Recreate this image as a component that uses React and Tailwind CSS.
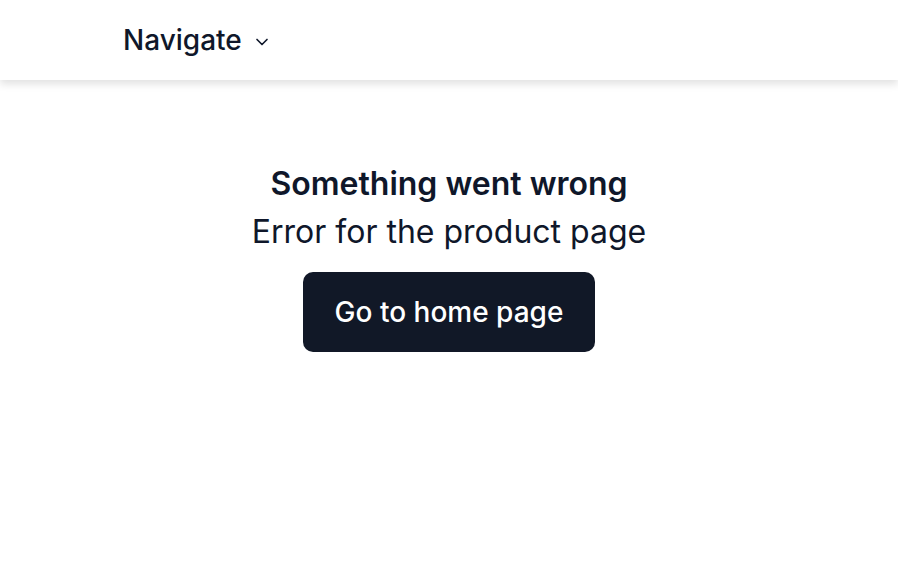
import { ChevronDown } from "lucide-react";

function App() {
  return (
    <div className="min-h-screen bg-white text-[#0f172a] font-['Inter',sans-serif]">
      <header className="flex h-20 items-center bg-white px-[123px] shadow-[0_4px_8px_rgba(0,0,0,0.12)]">
        <button type="button" className="flex items-center gap-[10px] text-[28px] font-medium">
          Navigate
          <ChevronDown className="mt-1 h-5 w-5" strokeWidth={2} />
        </button>
      </header>

      <main className="flex flex-col items-center pt-20">
        <h1 className="text-[32px] leading-[48px] font-semibold">Something went wrong</h1>
        <p className="text-[32px] leading-[48px]">Error for the product page</p>
        <button
          type="button"
          className="mt-4 h-20 w-[292px] rounded-[10px] bg-[#111827] text-[28px] font-medium text-white"
        >
          Go to home page
        </button>
      </main>
    </div>
  );
}

export default App;
